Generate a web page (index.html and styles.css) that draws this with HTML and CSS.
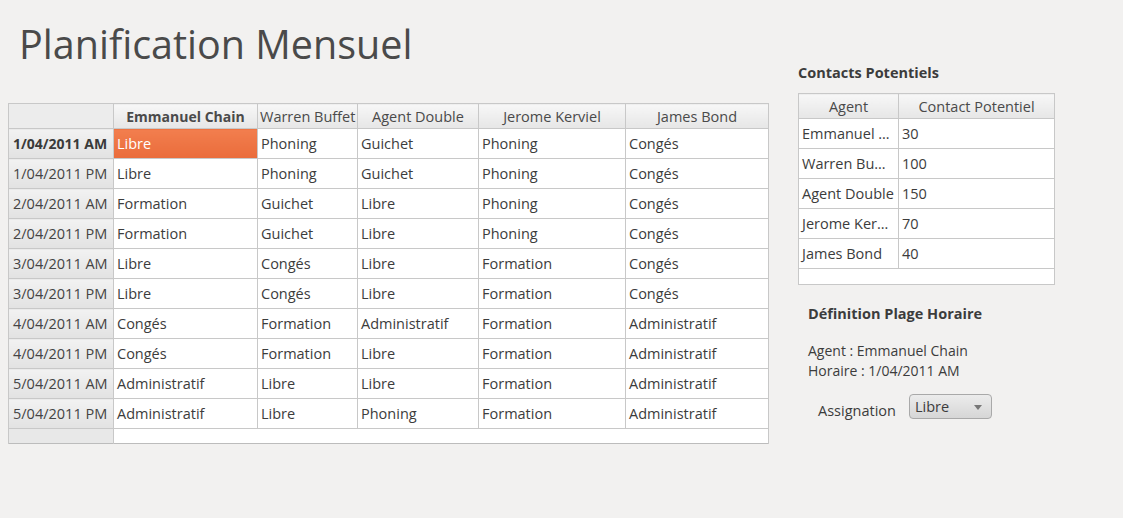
FILE: index.html
```html
<!DOCTYPE html>
<html lang="fr">
<head>
<meta charset="utf-8">
<title>Planification Mensuel</title>
<link rel="stylesheet" href="styles.css">
</head>
<body>
<div class="page">
  <h1 class="title">Planification Mensuel</h1>
  <div class="content">
    <div class="grid-wrap">
      <table class="grid">
        <colgroup>
          <col class="c0"><col class="c1"><col class="c2"><col class="c3"><col class="c4"><col class="c5">
        </colgroup>
        <thead>
          <tr>
            <th class="corner"></th>
            <th class="bold">Emmanuel Chain</th>
            <th>Warren Buffet</th>
            <th>Agent Double</th>
            <th>Jerome Kerviel</th>
            <th>James Bond</th>
          </tr>
        </thead>
        <tbody>
          <tr><th class="rh bold">1/04/2011 AM</th><td class="sel">Libre</td><td>Phoning</td><td>Guichet</td><td>Phoning</td><td>Congés</td></tr>
          <tr><th class="rh">1/04/2011 PM</th><td>Libre</td><td>Phoning</td><td>Guichet</td><td>Phoning</td><td>Congés</td></tr>
          <tr><th class="rh">2/04/2011 AM</th><td>Formation</td><td>Guichet</td><td>Libre</td><td>Phoning</td><td>Congés</td></tr>
          <tr><th class="rh">2/04/2011 PM</th><td>Formation</td><td>Guichet</td><td>Libre</td><td>Phoning</td><td>Congés</td></tr>
          <tr><th class="rh">3/04/2011 AM</th><td>Libre</td><td>Congés</td><td>Libre</td><td>Formation</td><td>Congés</td></tr>
          <tr><th class="rh">3/04/2011 PM</th><td>Libre</td><td>Congés</td><td>Libre</td><td>Formation</td><td>Congés</td></tr>
          <tr><th class="rh">4/04/2011 AM</th><td>Congés</td><td>Formation</td><td>Administratif</td><td>Formation</td><td>Administratif</td></tr>
          <tr><th class="rh">4/04/2011 PM</th><td>Congés</td><td>Formation</td><td>Libre</td><td>Formation</td><td>Administratif</td></tr>
          <tr><th class="rh">5/04/2011 AM</th><td>Administratif</td><td>Libre</td><td>Libre</td><td>Formation</td><td>Administratif</td></tr>
          <tr><th class="rh">5/04/2011 PM</th><td>Administratif</td><td>Libre</td><td>Phoning</td><td>Formation</td><td>Administratif</td></tr>
          <tr class="filler"><th class="rh"></th><td colspan="5"></td></tr>
        </tbody>
      </table>
    </div>
    <div class="side">
      <h2 class="side-title">Contacts Potentiels</h2>
      <div class="contacts-wrap">
        <table class="contacts">
          <colgroup><col class="k0"><col class="k1"></colgroup>
          <thead>
            <tr><th>Agent</th><th>Contact Potentiel</th></tr>
          </thead>
          <tbody>
            <tr><td>Emmanuel …</td><td>30</td></tr>
            <tr><td>Warren Bu…</td><td>100</td></tr>
            <tr><td>Agent Double</td><td>150</td></tr>
            <tr><td>Jerome Ker…</td><td>70</td></tr>
            <tr><td>James Bond</td><td>40</td></tr>
            <tr class="filler"><td colspan="2"></td></tr>
          </tbody>
        </table>
      </div>
      <div class="def">
        <h2 class="def-title">Définition Plage Horaire</h2>
        <p class="info">Agent : Emmanuel Chain</p>
        <p class="info">Horaire : 1/04/2011 AM</p>
        <div class="assign">
          <span class="assign-label">Assignation</span>
          <div class="combo"><span>Libre</span><span class="arrow"></span></div>
        </div>
      </div>
    </div>
  </div>
</div>
</body>
</html>
```

FILE: styles.css
```css
* { box-sizing: border-box; }
html, body { margin: 0; padding: 0; }
body {
  background: #f2f1f0;
  font-family: "Open Sans", "DejaVu Sans", sans-serif;
  color: #3c3c3c;
  width: 1123px;
  height: 518px;
  overflow: hidden;
}
.page { padding: 0 0 0 8px; }
.title {
  margin: 0;
  padding: 20px 0 0 11px;
  height: 103px;
  font-weight: 400;
  font-size: 39.5px;
  line-height: 48px;
  color: #4a4a4a;
}
.content { display: flex; margin-top: -38px; }
.grid-wrap { padding-top: 38px; }
.grid {
  border-collapse: collapse;
  table-layout: fixed;
  width: 760px;
  border: 1px solid #bcbcbc;
  font-size: 14.5px;
  background: #fff;
}
.grid col.c0 { width: 105px; }
.grid col.c1 { width: 144px; }
.grid col.c2 { width: 100px; }
.grid col.c3 { width: 121px; }
.grid col.c4 { width: 147px; }
.grid col.c5 { width: 143px; }
.grid thead th {
  height: 25px;
  padding: 0 2px;
  font-weight: 400;
  color: #4a4a4a;
  background: linear-gradient(#f7f7f7, #e6e6e6);
  border: 1px solid #c8c8c8;
  text-align: center;
  white-space: nowrap;
  overflow: hidden;
}
.grid thead th.corner { background: #ececec; }
.grid .bold { font-weight: 700; font-size: 14px; }
.grid tbody tr { height: 30px; }
.grid tbody th.rh {
  font-weight: 400;
  text-align: left;
  padding: 0 3px 0 4px;
  color: #444;
  background: linear-gradient(#f2f2f2, #e2e2e2);
  border: 1px solid #c8c8c8;
  white-space: nowrap;
  overflow: hidden;
}
.grid tbody th.rh.bold { font-weight: 700; color: #3a3a3a; }
.grid td {
  border: 1px solid #c8c8c8;
  padding: 0 3px;
  color: #3c3c3c;
  white-space: nowrap;
  overflow: hidden;
}
.grid td.sel {
  background: linear-gradient(#f27e4e, #ea6c3b);
  color: #fff;
}
.grid tr.filler { height: 15px; }
.grid tr.filler th.rh { background: #e8e8e8; border-bottom: 0; }
.grid tr.filler td { border-bottom: 0; }

.side { margin-left: 29px; width: 256px; }
.side-title {
  margin: 0;
  height: 28px;
  padding-top: 0;
  font-size: 14.5px;
  line-height: 16px;
  font-weight: 700;
  color: #3c3c3c;
}
.contacts {
  border-collapse: collapse;
  table-layout: fixed;
  width: 256px;
  border: 1px solid #bcbcbc;
  font-size: 14.5px;
  background: #fff;
}
.contacts col.k0 { width: 100px; }
.contacts col.k1 { width: 156px; }
.contacts thead th {
  height: 25px;
  font-weight: 400;
  color: #4a4a4a;
  background: linear-gradient(#f7f7f7, #e6e6e6);
  border: 1px solid #c8c8c8;
  text-align: center;
  white-space: nowrap;
}
.contacts tbody tr { height: 30px; }
.contacts td {
  border: 1px solid #c8c8c8;
  padding: 0 3px;
  white-space: nowrap;
  overflow: hidden;
  color: #3c3c3c;
}
.contacts tr.filler { height: 16px; }

.def { padding: 20px 0 0 10px; }
.def-title {
  margin: 0 0 18px;
  font-size: 14.5px;
  line-height: 18px;
  font-weight: 700;
  color: #3c3c3c;
}
.info { margin: 0; font-size: 14px; line-height: 20px; color: #3c3c3c; }
.assign { display: flex; align-items: center; margin-top: 12px; padding-left: 10px; }
.assign-label { font-size: 14.5px; color: #3c3c3c; margin-top: 8px; }
.combo {
  margin-left: 13px;
  width: 83px;
  height: 25px;
  border: 1px solid #a9a9a9;
  border-radius: 4px;
  background: linear-gradient(#ececec, #d6d6d6);
  display: flex;
  align-items: center;
  justify-content: space-between;
  padding: 0 9px 1px 5px;
  font-size: 14.5px;
  color: #3c3c3c;
}
.arrow {
  width: 0; height: 0;
  border-left: 4px solid transparent;
  border-right: 4px solid transparent;
  border-top: 5px solid #777;
  margin-top: 2px;
}
```
